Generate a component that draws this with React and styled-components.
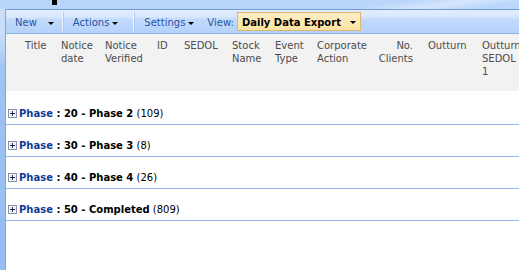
import React from 'react';
import styled, { createGlobalStyle } from 'styled-components';

const GlobalStyle = createGlobalStyle`
    html, body {
        margin: 0;
        padding: 0;
        background: #ffffff;
    }
    body {
        font-family: "DejaVu Sans", Verdana, sans-serif;
        font-size: 10px;
        overflow: hidden;
    }
`;

const Page = styled.div`
    display: flex;
    flex-direction: column;
    width: 519px;
    height: 270px;
    overflow: hidden;
`;

const TopStrip = styled.div`
    height: 9px;
    flex-shrink: 0;
    padding-left: 52px;
    background: linear-gradient(172deg, #b9d5fa 0%, #b9d5fa 70%, #d4e6fc 82%, #bad6fa 92%);
`;

const TitleStub = styled.div`
    width: 5px;
    height: 5px;
    background: #000000;
`;

const Main = styled.div`
    flex: 1;
    display: flex;
    min-height: 0;
`;

const LeftRail = styled.div`
    width: 5px;
    flex-shrink: 0;
    border-right: 1px solid #7fa8e2;
    background: linear-gradient(180deg, #c9def9 0px, #c9def9 25px, #9fc3f2 60px, #95bdf2 100%);
`;

const Content = styled.div`
    flex: 1;
    display: flex;
    flex-direction: column;
    min-width: 0;
`;

const Toolbar = styled.div`
    display: flex;
    align-items: center;
    box-sizing: border-box;
    height: 25px;
    padding-top: 2px;
    border-top: 1px solid #6f9ad6;
    border-bottom: 1px solid #8cb3e6;
    background: linear-gradient(180deg, #e2edfd 0%, #d8e8fd 30%, #c2dafb 40%, #b5d2fb 100%);
`;

const ToolButton = styled.div`
    display: flex;
    align-items: center;
    gap: ${(props) => props.$gap}px;
    height: 100%;
    padding: 0 ${(props) => props.$pr}px 0 ${(props) => props.$pl}px;
    color: #2a54a0;
    white-space: nowrap;
    cursor: pointer;
`;

const Arrow = styled.span`
    width: 0;
    height: 0;
    margin-top: 1px;
    border-left: 3px solid transparent;
    border-right: 3px solid transparent;
    border-top: 3px solid #000000;
`;

const Separator = styled.div`
    width: 1px;
    height: 19px;
    margin-top: -2px;
    background: #f2f7ff;
    box-shadow: 1px 0 0 #a9c8f0;
`;

const ViewLabel = styled.span`
    color: #2a54a0;
    margin-right: 3px;
    white-space: nowrap;
`;

const ViewSelect = styled.div`
    display: flex;
    align-items: center;
    justify-content: space-between;
    box-sizing: border-box;
    width: 124px;
    height: 19px;
    margin-top: -2px;
    padding: 1px 4px 0 4px;
    border: 1px solid #dcb777;
    background: linear-gradient(180deg, #ffeec6 0%, #fde3a3 100%);
    font-weight: bold;
    color: #000000;
    white-space: nowrap;
`;

const HeaderRow = styled.div`
    display: grid;
    grid-template-columns: 36px 44px 52px 27px 48px 43px 42px 51px 60px 54px 1fr;
    height: 57px;
    box-sizing: border-box;
    padding: 5px 0 0 19px;
    background: #f2f2f2;
    color: #4c4c4c;
    line-height: 13px;
`;

const HeaderCell = styled.div`
    text-align: ${(props) => (props.$right ? 'right' : 'left')};
    padding-right: ${(props) => (props.$right ? 15 : 0)}px;
    white-space: nowrap;
`;

const Body = styled.div`
    flex: 1;
    padding-top: 2px;
    background: #ffffff;
`;

const GroupRow = styled.div`
    display: flex;
    align-items: center;
    gap: 2px;
    height: 32px;
    box-sizing: border-box;
    padding: 14px 0 4px 2px;
    border-bottom: 1px solid #95b9ec;
    line-height: 13px;
    white-space: nowrap;
`;

const GroupText = styled.span`
    color: #000000;
`;

const FieldName = styled.b`
    color: #103c98;
`;

const FieldValue = styled.b`
    color: #000000;
`;

function PlusBox() {
    return (
        <svg width="9" height="9" viewBox="0 0 9 9">
            <rect x="0.5" y="0.5" width="8" height="8" fill="#f4f4f4" stroke="#8a94a4" />
            <path d="M2 4.5h5M4.5 2v5" stroke="#1c2c4c" strokeWidth="1" />
        </svg>
    );
}

const columns = [
    ['Title'],
    ['Notice', 'date'],
    ['Notice', 'Verified'],
    ['ID'],
    ['SEDOL'],
    ['Stock', 'Name'],
    ['Event', 'Type'],
    ['Corporate', 'Action'],
    ['No.', 'Clients'],
    ['Outturn'],
    ['Outturn', 'SEDOL', '1'],
];

const groups = [
    { value: '20 - Phase 2', count: 109 },
    { value: '30 - Phase 3', count: 8 },
    { value: '40 - Phase 4', count: 26 },
    { value: '50 - Completed', count: 809 },
];

function App() {
    return (
        <Page>
            <GlobalStyle />
            <TopStrip>
                <TitleStub />
            </TopStrip>
            <Main>
                <LeftRail />
                <Content>
                    <Toolbar>
                        <ToolButton $pl={9} $pr={8} $gap={11}>
                            New <Arrow />
                        </ToolButton>
                        <Separator />
                        <ToolButton $pl={10} $pr={15} $gap={3}>
                            Actions <Arrow />
                        </ToolButton>
                        <Separator />
                        <ToolButton $pl={10} $pr={13} $gap={3}>
                            Settings <Arrow />
                        </ToolButton>
                        <ViewLabel>View:</ViewLabel>
                        <ViewSelect>
                            Daily Data Export <Arrow />
                        </ViewSelect>
                    </Toolbar>
                    <HeaderRow>
                        {columns.map((lines, i) => (
                            <HeaderCell key={i} $right={lines[0] === 'No.'}>
                                {lines.map((line, j) => (
                                    <div key={j}>{line}</div>
                                ))}
                            </HeaderCell>
                        ))}
                    </HeaderRow>
                    <Body>
                        {groups.map((g) => (
                            <GroupRow key={g.value}>
                                <PlusBox />
                                <GroupText>
                                    <FieldName>Phase</FieldName>
                                    <FieldValue> : {g.value}</FieldValue> ({g.count})
                                </GroupText>
                            </GroupRow>
                        ))}
                    </Body>
                </Content>
            </Main>
        </Page>
    );
}

export default App;
